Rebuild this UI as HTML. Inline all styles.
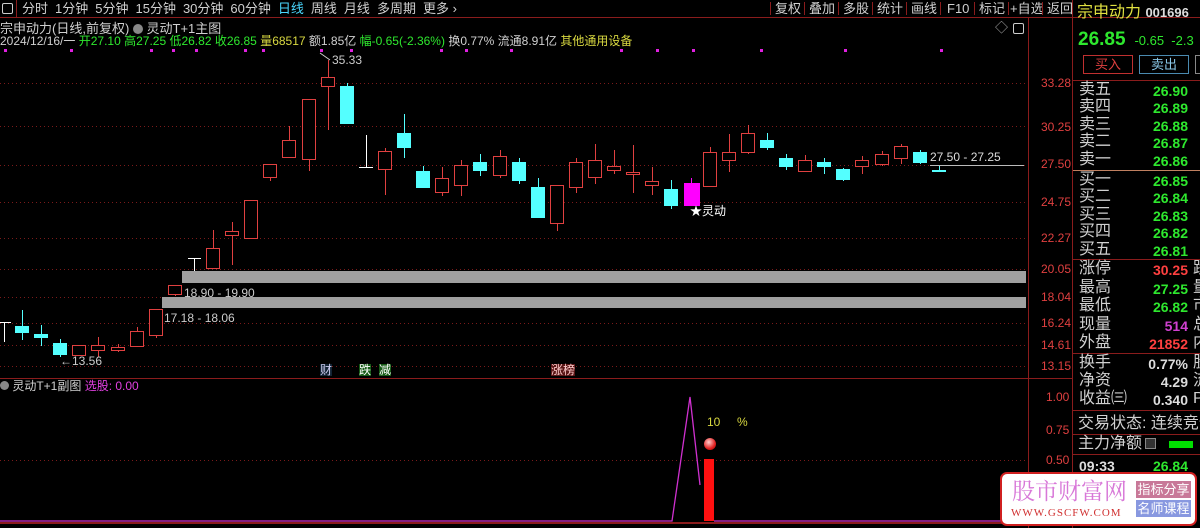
<!DOCTYPE html>
<html><head><meta charset="utf-8"><style>
*{margin:0;padding:0;box-sizing:border-box}
body{width:1200px;height:528px;background:#000;overflow:hidden;position:relative;font-family:"Liberation Sans","Noto Sans CJK SC",sans-serif;color:#c8c8c8}
.a{position:absolute;white-space:nowrap;line-height:1}
.tb{font-size:13px;color:#d0d0d0}
.ax{font-size:12px;color:#e04040;left:1041px}
.rl{font-size:16px;color:#d0d0d0;left:1079px}
.rv{font-size:14px;font-weight:bold;right:12px;font-family:"Liberation Sans",sans-serif}
.g{color:#2ee82e}.r{color:#ff4040}
.hl{position:absolute;left:1073px;width:127px;height:1px;background:#8a1c1c}
.tbs span{margin-right:7px}
</style></head><body>
<div class="a" style="left:0;top:0;width:1200px;height:18px;border-bottom:1px solid #8a1c1c"></div>
<div class="a" style="left:2px;top:3px;width:11px;height:11px;border:1px solid #ccc;border-radius:2px"></div>
<div class="a" style="left:16px;top:0;width:1px;height:18px;background:#8a1c1c"></div>
<div class="a tb tbs" style="left:22px;top:2px"><span>分时</span><span>1分钟</span><span>5分钟</span><span>15分钟</span><span>30分钟</span><span>60分钟</span><span style="color:#4ad8ff">日线</span><span>周线</span><span>月线</span><span>多周期</span><span>更多 ›</span></div>
<div class="a tb" style="left:770px;top:2px">
<span style="display:inline-block;width:34px;border-left:1px solid #8a1c1c;padding-left:4px">复权</span><span style="display:inline-block;width:34px;border-left:1px solid #8a1c1c;padding-left:4px">叠加</span><span style="display:inline-block;width:34px;border-left:1px solid #8a1c1c;padding-left:4px">多股</span><span style="display:inline-block;width:34px;border-left:1px solid #8a1c1c;padding-left:4px">统计</span><span style="display:inline-block;width:34px;border-left:1px solid #8a1c1c;padding-left:4px">画线</span><span style="display:inline-block;width:34px;border-left:1px solid #8a1c1c;padding-left:6px">F10</span><span style="display:inline-block;width:34px;border-left:1px solid #8a1c1c;padding-left:4px">标记</span><span style="display:inline-block;width:34px;border-left:1px solid #8a1c1c;padding-left:1px">+自选</span><span style="display:inline-block;width:34px;border-left:1px solid #8a1c1c;padding-left:4px">返回</span></div>
<div class="a" style="left:0;top:22px;font-size:13px;color:#d0d0d0">宗申动力(日线,前复权) <span style="display:inline-block;width:10px;height:10px;border-radius:5px;background:#888;vertical-align:-1px"></span> 灵动T+1主图</div>
<div class="a" style="left:0;top:35px;font-size:12px;color:#d0d0d0">2024/12/16/一 <span class="g">开27.10 高27.25 低26.82 收26.85</span> <span style="color:#d8d840">量68517</span> 额1.85亿 <span class="g">幅-0.65(-2.36%)</span> 换0.77% 流通8.91亿 <span style="color:#d8d840">其他通用设备</span></div>
<div class="a" style="left:995px;top:21px;font-size:13px;color:#aaa">◇</div>
<div class="a" style="left:1013px;top:23px;width:11px;height:11px;border:1px solid #ccc;border-radius:2px"></div>
<div class="a" style="left:1028px;top:18px;width:1px;height:510px;background:#8a1c1c"></div>
<div class="a" style="left:1072px;top:0;width:1px;height:528px;background:#8a1c1c"></div>
<div class="a" style="left:0;top:378px;width:1072px;height:1px;background:#8a1c1c"></div>
<div class="a" style="left:0;top:522px;width:1072px;height:2px;background:#8a1c1c"></div>
<svg class="a" id="ch" style="left:0;top:0" width="1028" height="528"></svg>
<div class="a ax" style="top:77px">33.28</div>
<div class="a ax" style="top:121px">30.25</div>
<div class="a ax" style="top:158px">27.50</div>
<div class="a ax" style="top:196px">24.75</div>
<div class="a ax" style="top:232px">22.27</div>
<div class="a ax" style="top:263px">20.05</div>
<div class="a ax" style="top:291px">18.04</div>
<div class="a ax" style="top:317px">16.24</div>
<div class="a ax" style="top:339px">14.61</div>
<div class="a ax" style="top:360px">13.15</div>
<div class="a ax" style="top:391px;left:1046px">1.00</div>
<div class="a ax" style="top:424px;left:1046px">0.75</div>
<div class="a ax" style="top:454px;left:1046px">0.50</div>
<div class="a" style="left:332px;top:54px;font-size:12px;color:#ccc">35.33</div>
<div class="a" style="left:60px;top:355px;font-size:12px;color:#ccc">←13.56</div>
<div class="a" style="left:184px;top:287px;font-size:12px;color:#ccc">18.90 - 19.90</div>
<div class="a" style="left:164px;top:312px;font-size:12px;color:#ccc">17.18 - 18.06</div>
<div class="a" style="left:930px;top:151px;font-size:12px;color:#ddd">27.50 - 27.25</div>
<div class="a" style="left:690px;top:205px;font-size:12px;color:#fff">★灵动</div>
<div class="a" style="left:320px;top:364px;font-size:12px;color:#cce;background:#123">财</div>
<div class="a" style="left:359px;top:364px;font-size:12px;color:#fff;background:#165a16">跌</div>
<div class="a" style="left:379px;top:364px;font-size:12px;color:#fff;background:#165a16">减</div>
<div class="a" style="left:551px;top:364px;font-size:12px;color:#fcc;background:#5a1616">涨榜</div>
<div class="a" style="left:0;top:380px;font-size:12px;color:#d0d0d0"><span style="display:inline-block;width:9px;height:9px;border-radius:5px;background:#888"></span> 灵动T+1副图 <span style="color:#e040e0">选股: 0.00</span></div>
<div class="a" style="left:707px;top:416px;font-size:12px;color:#d8d840">10&nbsp;&nbsp;&nbsp;&nbsp; %</div>
<div class="a" style="left:704px;top:438px;width:12px;height:12px;border-radius:6px;background:radial-gradient(circle at 40% 35%,#fcc,#e02020 60%,#900)"></div>
<div class="a" style="left:1077px;top:5px;font-size:16px;color:#e0e040">宗申动力 <span style="font-size:13px;color:#ddd;font-weight:bold">001696</span></div>
<div class="a" style="left:1078px;top:30px;font-size:19px;font-weight:bold;color:#2ee82e">26.85 <span style="font-size:13px;font-weight:normal">&nbsp;-0.65&nbsp; -2.3</span></div>
<div class="a" style="left:1083px;top:55px;width:50px;height:19px;border:1px solid #c03030;color:#e04040;font-size:13px;text-align:center;line-height:17px">买入</div>
<div class="a" style="left:1139px;top:55px;width:50px;height:19px;border:1px solid #4a8ab0;color:#8ac8e8;font-size:13px;text-align:center;line-height:17px">卖出</div>
<div class="a" style="left:1195px;top:55px;width:10px;height:19px;border:1px solid #888"></div>
<div class="hl" style="top:80px"></div>
<div class="a rl" style="top:82px">卖五</div><div class="a rv g" style="top:84px">26.90</div>
<div class="a rl" style="top:99px">卖四</div><div class="a rv g" style="top:101px">26.89</div>
<div class="a rl" style="top:117px">卖三</div><div class="a rv g" style="top:119px">26.88</div>
<div class="a rl" style="top:134px">卖二</div><div class="a rv g" style="top:136px">26.87</div>
<div class="a rl" style="top:152px">卖一</div><div class="a rv g" style="top:154px">26.86</div>
<div class="hl" style="top:170px;background:#c08060"></div>
<div class="a rl" style="top:172px">买一</div><div class="a rv g" style="top:174px">26.85</div>
<div class="a rl" style="top:189px">买二</div><div class="a rv g" style="top:191px">26.84</div>
<div class="a rl" style="top:207px">买三</div><div class="a rv g" style="top:209px">26.83</div>
<div class="a rl" style="top:224px">买四</div><div class="a rv g" style="top:226px">26.82</div>
<div class="a rl" style="top:242px">买五</div><div class="a rv g" style="top:244px">26.81</div>
<div class="hl" style="top:259px"></div>
<div class="a rl" style="top:261px">涨停</div><div class="a rv r" style="top:263px">30.25</div><div class="a rl" style="top:261px;left:1193px">跌</div>
<div class="a rl" style="top:280px">最高</div><div class="a rv g" style="top:282px">27.25</div><div class="a rl" style="top:280px;left:1193px">量</div>
<div class="a rl" style="top:298px">最低</div><div class="a rv g" style="top:300px">26.82</div><div class="a rl" style="top:298px;left:1193px">市</div>
<div class="a rl" style="top:317px">现量</div><div class="a rv" style="top:319px;color:#d040d0">514</div><div class="a rl" style="top:317px;left:1193px">总</div>
<div class="a rl" style="top:335px">外盘</div><div class="a rv r" style="top:337px">21852</div><div class="a rl" style="top:335px;left:1193px">内</div>
<div class="hl" style="top:353px"></div>
<div class="a rl" style="top:355px">换手</div><div class="a rv" style="top:357px;color:#ddd">0.77%</div><div class="a rl" style="top:355px;left:1193px">股</div>
<div class="a rl" style="top:373px">净资</div><div class="a rv" style="top:375px;color:#ddd">4.29</div><div class="a rl" style="top:373px;left:1193px">流</div>
<div class="a rl" style="top:391px">收益㈢</div><div class="a rv" style="top:393px;color:#ddd">0.340</div><div class="a rl" style="top:391px;left:1193px">P</div>
<div class="hl" style="top:410px"></div>
<div class="a rl" style="top:416px;left:1078px">交易状态: 连续竞价</div>
<div class="hl" style="top:434px"></div>
<div class="a rl" style="top:436px;left:1078px">主力净额</div>
<div class="a" style="left:1145px;top:438px;width:11px;height:11px;border:1px solid #888;background:#333"></div>
<div class="a" style="left:1169px;top:441px;width:24px;height:7px;background:#00e000"></div>
<div class="hl" style="top:454px"></div>
<div class="a" style="left:1079px;top:459px;font-size:14px;font-weight:bold;color:#ddd">09:33</div><div class="a rv g" style="top:459px">26.84</div>
<div class="a" style="left:1000px;top:472px;width:197px;height:54px;background:#fff;border:2px solid #d02020;border-radius:7px"></div>
<div class="a" style="left:1012px;top:478px;font-size:23px;color:#d878d8;font-family:'Noto Serif CJK SC',serif">股市财富网</div>
<div class="a" style="left:1011px;top:508px;font-size:11px;color:#d03030;font-family:'Liberation Serif',serif;letter-spacing:1px">WWW.GSCFW.COM</div>
<div class="a" style="left:1136px;top:481px;width:55px;height:17px;background:#c87898;color:#fff;font-size:13px;text-align:center;line-height:17px">指标分享</div>
<div class="a" style="left:1136px;top:500px;width:55px;height:17px;background:#8898e0;color:#fff;font-size:13px;text-align:center;line-height:17px">名师课程</div>
<script>
var s='';
[4,70,150,172,195,244,262,320,350,440,465,510,620,656,692,760,844,940].forEach(function(x){s+='<rect x="'+x+'" y="49" width="3" height="3" fill="#e020e0"/>';});
[83,126,165,202,238,269,297,323,345,366].forEach(function(y){s+='<line x1="0" y1="'+y+'.5" x2="1026" y2="'+y+'.5" stroke="#7a1a1a" stroke-dasharray="1,3"/>';});
s+='<line x1="0" y1="460.5" x2="1026" y2="460.5" stroke="#7a1a1a" stroke-dasharray="1,3"/>';
s+='<rect x="182" y="271" width="844" height="12" fill="#a0a0a0"/><rect x="162" y="297" width="864" height="11" fill="#a0a0a0"/>';
s+='<line x1="930" y1="165.5" x2="1024" y2="165.5" stroke="#bbb"/>';
var C=[['c',326,333,310,340],['c',334,338,325,346],['c',343,355,339,357],['r',345,355,345,355],['r',345,350,337,357],['r',347,350,344,352],['r',331,346,327,346],['r',309,335,309,338],['r',285,294,285,296],['t'],['r',248,268,230,268],['r',231,235,222,265],['r',200,238,200,238],['r',164,177,164,181],['r',140,157,126,158],['r',99,159,99,171],['r',77,86,60,130],['c',86,124,83,124],['u'],['r',151,169,148,195],['c',133,148,114,158],['c',171,188,166,188],['r',178,192,167,196],['r',165,185,160,196],['c',162,171,154,176],['r',156,175,150,178],['c',162,181,158,184],['c',187,218,178,218],['r',185,223,185,231],['r',162,187,158,193],['r',160,177,144,184],['r',166,170,150,174],['r',172,174,145,193],['r',181,185,167,195],['c',189,206,180,209],['m',183,206,178,206],['r',152,186,147,186],['r',152,160,134,172],['r',133,152,125,154],['c',140,148,133,150],['c',158,167,154,170],['r',160,171,155,171],['c',162,167,158,174],['c',169,180,168,181],['r',160,166,156,174],['r',154,164,151,166],['r',146,158,144,164],['c',152,163,150,164],['c',170,172,166,172]];
s+='<line x1="4.5" y1="322" x2="4.5" y2="342" stroke="#fff"/><line x1="-2" y1="322.5" x2="11" y2="322.5" stroke="#fff"/>';
C.forEach(function(c,i){var x=Math.round(22+19.1*i);
 if(c[0]=='t'){s+='<line x1="'+x+'.5" y1="258" x2="'+x+'.5" y2="271" stroke="#fff"/><line x1="'+(x-6)+'" y1="258.5" x2="'+(x+7)+'" y2="258.5" stroke="#fff"/>';return;}
 if(c[0]=='u'){s+='<line x1="'+x+'.5" y1="135" x2="'+x+'.5" y2="167" stroke="#fff"/><line x1="'+(x-7)+'" y1="167.5" x2="'+(x+7)+'" y2="167.5" stroke="#fff"/>';return;}
 var col=c[0]=='r'?'#e04040':c[0]=='c'?'#54ffff':'#ff00ff';
 s+='<line x1="'+x+'.5" y1="'+c[3]+'" x2="'+x+'.5" y2="'+c[4]+'" stroke="'+col+'"/>';
 if(c[0]=='r')s+='<rect x="'+(x-6.5)+'" y="'+(c[1]+.5)+'" width="13" height="'+Math.max(c[2]-c[1],2)+'" fill="#000" stroke="'+col+'"/>';
 else s+='<rect x="'+(x-7)+'" y="'+c[1]+'" width="'+(c[0]=='m'?16:14)+'" height="'+Math.max(c[2]-c[1],2)+'" fill="'+col+'"/>';
});
s+='<line x1="320" y1="53" x2="330" y2="60" stroke="#ccc"/>';
s+='<polyline points="0,521 672,521 690,397 700,485" fill="none" stroke="#d030d0" stroke-width="1.3"/><line x1="714" y1="521" x2="1026" y2="521" stroke="#d030d0" stroke-width="1.3"/>';
s+='<rect x="704" y="459" width="10" height="62" fill="#ff1010"/>';
document.getElementById('ch').innerHTML=s;
</script>
</body></html>
